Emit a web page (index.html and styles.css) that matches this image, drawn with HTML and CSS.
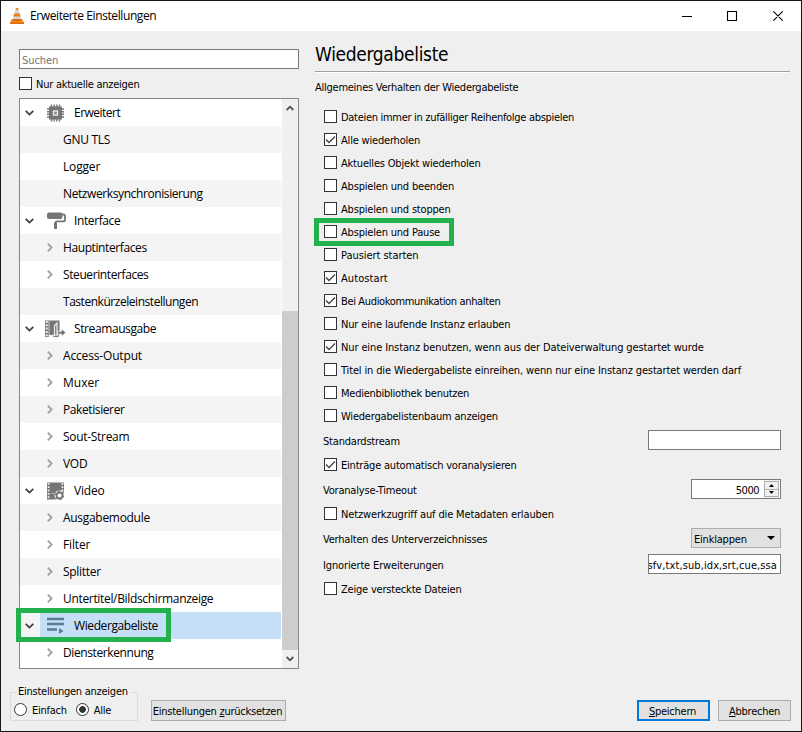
FILE: index.html
```html
<!DOCTYPE html>
<html lang="de">
<head>
<meta charset="utf-8">
<title>Erweiterte Einstellungen</title>
<link rel="stylesheet" href="styles.css">
</head>
<body>
<svg class="defs" aria-hidden="true">
  <symbol id="open" viewBox="0 0 9 6"><path d="M.7.8 4.5 4.6 8.3.8" fill="none" stroke="#404040" stroke-width="1.8"/></symbol>
  <symbol id="closed" viewBox="0 0 6 9"><path d="M.8.7 4.6 4.5.8 8.3" fill="none" stroke="#a0a0a0" stroke-width="1.8"/></symbol>
  <symbol id="tick" viewBox="0 0 11 11"><path d="M1 5.5 4 8.5 10 2.5" fill="none" stroke="#404040" stroke-width="1.3"/></symbol>
</svg>
<div class="window">
  <header class="titlebar">
    <svg class="cone" viewBox="0 0 14 16"><path d="M1.7 11h10.6l1.7 4.5H0z" fill="#f28a17"/><path d="M0 14.4h14V16H0z" fill="#d96f0b"/><path d="M6 0h2l3.6 12.2Q7 14 2.4 12.2z" fill="#d4d4d4"/><path d="M5.500 1.800 6 0h2l.5 1.800zM4.300 5.500h5.400l.9 3H3.400z" fill="#f07d13"/><path d="M2.800 11h8.400l.4 1.400Q7 14 2.400 12.400z" fill="#e5680c"/></svg>
    <span class="caption">Erweiterte Einstellungen</span>
    <svg class="controls" viewBox="0 0 103 12"><path d="M0 6.500h10M45.500 1.500h9v9h-9zM91.300 1.300l9.400 9.400M100.700 1.300l-9.400 9.400" fill="none" stroke="#000" stroke-width="1.1"/></svg>
  </header>
  <div class="body">
    <aside class="left">
      <div class="field search">Suchen</div>
      <label class="check only"><i class="box"></i><span>Nur aktuelle anzeigen</span></label>
      <div class="tree">
        <ul>
          <li class="top"><svg class="tw"><use href="#open"/></svg><svg class="ic" viewBox="0 0 22 18"><path d="M5 2.500h13v13H5z" fill="#757575"/><path d="M7.500.5v17M10.200.5v17M12.800.5v17M15.500.5v17M3 5h17M3 7.700h17M3 10.300h17M3 13h17" stroke="#757575" stroke-width="1.400"/><path d="M9.500 7h4v4h-4z" fill="#8a8a8a" stroke="#e4e4e4" stroke-width="1.400"/></svg><span>Erweitert</span></li>
          <li class="sub"><span>GNU TLS</span></li>
          <li class="sub"><span>Logger</span></li>
          <li class="sub"><span>Netzwerksynchronisierung</span></li>
          <li class="top"><svg class="tw"><use href="#open"/></svg><svg class="ic" viewBox="0 0 22 18"><rect x="3" y=".5" width="15.500" height="6.500" rx="2" fill="#757575"/><path d="M18 2.500h1.500q1.500 0 1.500 1.500v4q0 1.300-1.500 1.300H13q-1.500 0-1.500 1.500V12" fill="none" stroke="#757575" stroke-width="1.800"/><path d="M10 10.500h3V17h-3z" fill="#757575"/></svg><span>Interface</span></li>
          <li class="sub"><svg class="tw"><use href="#closed"/></svg><span>Hauptinterfaces</span></li>
          <li class="sub"><svg class="tw"><use href="#closed"/></svg><span>Steuerinterfaces</span></li>
          <li class="sub"><span>Tastenkürzeleinstellungen</span></li>
          <li class="top"><svg class="tw"><use href="#open"/></svg><svg class="ic" viewBox="0 0 22 18"><path d="M1 .5h14.500V15h-1V17H9v-2H5v2H1z" fill="#757575"/><path d="M2.700 1v16" stroke="#eee" stroke-width="2" stroke-dasharray="2 1.300"/><path d="M5 1v16" stroke="#eee" stroke-width=".7"/><path d="M7 15.500h3.500V5.500L13 3v12h-1.500" fill="none" stroke="#e8e8e8" stroke-width="1.300"/><path d="M13.500 11.300h4V8.700l4.300 3.900-4.300 3.900v-2.500h-4z" fill="#757575" stroke="#fff" stroke-width=".7"/></svg><span>Streamausgabe</span></li>
          <li class="sub"><svg class="tw"><use href="#closed"/></svg><span>Access-Output</span></li>
          <li class="sub"><svg class="tw"><use href="#closed"/></svg><span>Muxer</span></li>
          <li class="sub"><svg class="tw"><use href="#closed"/></svg><span>Paketisierer</span></li>
          <li class="sub"><svg class="tw"><use href="#closed"/></svg><span>Sout-Stream</span></li>
          <li class="sub"><svg class="tw"><use href="#closed"/></svg><span>VOD</span></li>
          <li class="top"><svg class="tw"><use href="#open"/></svg><svg class="ic" viewBox="0 0 22 18"><path d="M3 .5h17V11h-5l-3 3v3.500H3z" fill="#757575"/><path d="M4.600 1v16M18.400 1v9" stroke="#eee" stroke-width="1.800" stroke-dasharray="1.800 1.500"/><path d="M6.500 11.500H12" stroke="#aaa"/><circle cx="15.500" cy="13.500" r="5" fill="#fff"/><circle cx="15.500" cy="13.500" r="3" fill="none" stroke="#757575" stroke-width="1.800"/><circle cx="15.500" cy="13.500" r="4" fill="none" stroke="#757575" stroke-width="1.300" stroke-dasharray="2.100 2.090"/></svg><span>Video</span></li>
          <li class="sub"><svg class="tw"><use href="#closed"/></svg><span>Ausgabemodule</span></li>
          <li class="sub"><svg class="tw"><use href="#closed"/></svg><span>Filter</span></li>
          <li class="sub"><svg class="tw"><use href="#closed"/></svg><span>Splitter</span></li>
          <li class="sub"><svg class="tw"><use href="#closed"/></svg><span>Untertitel/Bildschirmanzeige</span></li>
          <li class="top selected"><svg class="tw"><use href="#open"/></svg><svg class="ic" viewBox="0 0 22 18"><path d="M3 2h17M3 7h17M3 12.500h10" stroke="#597b98" stroke-width="2.500"/><path d="M15 11l4.500 3-4.500 3z" fill="#597b98"/></svg><span>Wiedergabeliste</span></li>
          <li class="sub"><svg class="tw"><use href="#closed"/></svg><span>Diensterkennung</span></li>
        </ul>
        <div class="scroll">
          <svg viewBox="0 0 8 6"><path d="M.7 5 4 1.700 7.300 5" fill="none" stroke="#505050" stroke-width="1.800"/></svg>
          <div class="track"><div class="thumb"></div></div>
          <svg viewBox="0 0 8 6"><path d="M.7 1 4 4.300 7.300 1" fill="none" stroke="#505050" stroke-width="1.800"/></svg>
        </div>
        <div class="mark mark-tree"></div>
      </div>
    </aside>
    <main class="right">
      <h1><span>Wiedergabeliste</span></h1>
      <p class="intro">Allgemeines Verhalten der Wiedergabeliste</p>
      <div class="options">
        <label class="check"><i class="box"></i><span>Dateien immer in zufälliger Reihenfolge abspielen</span></label>
        <label class="check"><i class="box"><svg><use href="#tick"/></svg></i><span>Alle wiederholen</span></label>
        <label class="check"><i class="box"></i><span>Aktuelles Objekt wiederholen</span></label>
        <label class="check"><i class="box"></i><span>Abspielen und beenden</span></label>
        <label class="check"><i class="box"></i><span>Abspielen und stoppen</span></label>
        <label class="check"><i class="box"></i><span>Abspielen und Pause</span><b class="mark mark-option"></b></label>
        <label class="check"><i class="box"></i><span>Pausiert starten</span></label>
        <label class="check"><i class="box"><svg><use href="#tick"/></svg></i><span>Autostart</span></label>
        <label class="check"><i class="box"><svg><use href="#tick"/></svg></i><span>Bei Audiokommunikation anhalten</span></label>
        <label class="check"><i class="box"></i><span>Nur eine laufende Instanz erlauben</span></label>
        <label class="check"><i class="box"><svg><use href="#tick"/></svg></i><span>Nur eine Instanz benutzen, wenn aus der Dateiverwaltung gestartet wurde</span></label>
        <label class="check"><i class="box"></i><span>Titel in die Wiedergabeliste einreihen, wenn nur eine Instanz gestartet werden darf</span></label>
        <label class="check"><i class="box"></i><span>Medienbibliothek benutzen</span></label>
        <label class="check"><i class="box"></i><span>Wiedergabelistenbaum anzeigen</span></label>
        <div class="row"><span>Standardstream</span><div class="field wide"></div></div>
        <label class="check"><i class="box"><svg><use href="#tick"/></svg></i><span>Einträge automatisch voranalysieren</span></label>
        <div class="row"><span>Voranalyse-Timeout</span><div class="field spin"><span>5000</span><div class="steps"><i><svg viewBox="0 0 5 3"><path d="M0 3 2.500 0 5 3z"/></svg></i><i><svg viewBox="0 0 5 3"><path d="M0 0 2.500 3 5 0z"/></svg></i></div></div></div>
        <label class="check"><i class="box"></i><span>Netzwerkzugriff auf die Metadaten erlauben</span></label>
        <div class="row"><span>Verhalten des Unterverzeichnisses</span><div class="combo"><span>Einklappen</span><svg viewBox="0 0 8 4"><path d="M0 0h8L4 4z"/></svg></div></div>
        <div class="row"><span>Ignorierte Erweiterungen</span><div class="field wide ext"><span>sfv,txt,sub,idx,srt,cue,ssa</span></div></div>
        <label class="check"><i class="box"></i><span>Zeige versteckte Dateien</span></label>
      </div>
    </main>
  </div>
  <footer class="bottom">
    <fieldset class="group">
      <legend>Einstellungen anzeigen</legend>
      <label><i class="radio"></i><span>Einfach</span></label>
      <label><i class="radio on"></i><span>Alle</span></label>
    </fieldset>
    <button class="btn reset"><span>Einstellungen <u>z</u>urücksetzen</span></button>
    <button class="btn save"><span><u>S</u>peichern</span></button>
    <button class="btn"><span><u>A</u>bbrechen</span></button>
  </footer>
</div>
</body>
</html>
```
FILE: styles.css
```css
* { box-sizing: border-box; }
body { margin: 0; color: #000; font: 11px/14px "DejaVu Sans Condensed", "DejaVu Sans", sans-serif; font-stretch: condensed; letter-spacing: -0.25px; white-space: nowrap; }
.defs { position: absolute; width: 0; height: 0; }
svg { display: block; flex: none; }
.window { width: 802px; height: 732px; border: 1px solid #18181c; background: #efefef; display: flex; flex-direction: column; overflow: hidden; }
.titlebar { height: 30px; flex: none; background: #fff; display: flex; align-items: center; padding: 0 16px 0 9px; }
.cone { width: 14px; height: 16px; }
.caption { font: 12px/16px "Open Sans", sans-serif; letter-spacing: -0.4px; margin-left: 6px; }
.controls { width: 103px; height: 12px; margin-left: auto; }
.body { display: flex; height: 640px; flex: none; }
.left { width: 280px; margin-left: 18px; padding-top: 18px; flex: none; }
.field { height: 20px; border: 1px solid #7a7a7a; background: #fff; }
.search { color: #767676; padding: 4px 2px 0; letter-spacing: -0.05px; }
.check { display: flex; align-items: center; height: 23px; position: relative; }
.check > span { margin-top: 2px; }
.box { width: 13px; height: 13px; border: 1px solid #333; background: #fff; margin-right: 4px; flex: none; }
.box svg { width: 11px; height: 11px; }
.only { height: 29px; }

/* Settings tree */
.tree { position: relative; height: 571px; border: 1px solid #828790; background: #fff; display: flex; }
.tree ul { width: 261px; margin: 0 1px 0 0; padding: 0; list-style: none; font: 12px/16px "Open Sans", sans-serif; letter-spacing: -0.4px; }
.tree li { height: 27px; display: flex; align-items: center; }
.tree li:nth-child(even) { background: #f4f4f4; }
.tree li:nth-child(1) { letter-spacing: -0.52px; }
.tree li:nth-child(3), .tree li:nth-child(10), .tree li:nth-child(15), .tree li:nth-child(17) { letter-spacing: -0.16px; }
.tree li:nth-child(8) { letter-spacing: -0.46px; }
.tree li:nth-child(11) { letter-spacing: 0; }
.tree li:nth-child(2), .tree li:nth-child(13), .tree li:nth-child(14), .tree li:nth-child(16), .tree li:nth-child(18) { letter-spacing: -0.3px; }
.tree li:nth-child(19) { letter-spacing: -0.33px; }
.tree .tw { width: 9px; height: 6px; }
.top .tw { margin-left: 5px; }
.top .ic { width: 22px; height: 18px; margin: 0 8px 0 10px; }
.sub { padding-left: 27px; }
.tree .sub .tw { width: 6px; height: 9px; margin-right: 10px; }
.sub > span:first-child { margin-left: 16px; }
.tree .selected:nth-child(even) { background: linear-gradient(90deg, #f4f4f4 20px, #c5dff6 20px); }
.scroll { width: 16px; background: #f0f0f0; display: flex; flex-direction: column; align-items: center; }
.scroll > svg { width: 8px; height: 6px; margin: 6px 0; }
.track { flex: 1; align-self: stretch; padding-top: 194px; display: flex; }
.thumb { flex: 1; background: #cdcdcd; }
.mark { position: absolute; border: 5px solid #22b14c; }
.mark-tree { left: -4px; top: 509px; width: 155px; height: 34px; }
.mark-option { left: -10px; top: -2px; width: 140px; height: 28px; }

/* Options page */
.right { margin-left: 16px; width: 475px; }
h1 { margin: 0; height: 41px; padding-top: 11px; font-size: 19px; line-height: 24px; font-weight: 400; letter-spacing: -0.33px; border-bottom: 1px solid #a0a0a0; box-shadow: 0 1px #fff; }
.intro { margin: 0; height: 33px; padding-top: 9px; }
.options { padding: 0 9px; }
.options > :nth-child(1) { letter-spacing: -0.3px; }
.options > :nth-child(n+2):nth-child(-n+6) { letter-spacing: -0.19px; }
.options > :nth-child(7) { letter-spacing: -0.05px; }
.options > :nth-child(8) { letter-spacing: 0.08px; }
.options > :nth-child(9) { letter-spacing: -0.35px; }
.options > :nth-child(10) { letter-spacing: -0.15px; }
.options > :nth-child(11) { letter-spacing: -0.12px; }
.options > :nth-child(12) { letter-spacing: -0.14px; }
.options > :nth-child(n+14) { letter-spacing: -0.2px; }
.options > :nth-child(18), .options > :nth-child(20) { letter-spacing: -0.14px; }
.row { height: 26px; display: flex; align-items: center; justify-content: space-between; }
.row > span { margin: 3px 0 0 -1px; }
.wide { width: 133px; }
.ext { overflow: hidden; display: flex; justify-content: flex-end; align-items: center; padding: 3px 3px 0 0; letter-spacing: 0.1px; }
.spin { width: 90px; display: flex; align-items: center; letter-spacing: -0.5px; }
.spin > span { margin: 3px 5px 0 auto; }
.steps { width: 15px; height: 18px; margin-right: 1px; display: flex; flex-direction: column; background: #f0f0f0; padding: 1px 0; }
.steps i { flex: 1; border: 1px solid #adadad; display: flex; align-items: center; justify-content: center; }
.steps i + i { border-top: 0; }
.steps svg { width: 5px; height: 3px; }
.combo { width: 90px; height: 20px; border: 1px solid #adadad; background: #e1e1e1; display: flex; align-items: center; justify-content: space-between; padding: 0 5px 0 2px; }
.combo span { margin-top: 3px; }
.combo svg { width: 8px; height: 4px; }

/* Bottom bar */
.bottom { flex: none; height: 60px; display: flex; align-items: flex-start; padding: 14px 10px 0 9px; }
.group { margin: 0 13px 0 0; width: 128px; height: 36px; border: 1px solid #dcdcdc; padding: 0 0 0 3px; display: flex; }
.group legend { padding: 0 2px; margin-left: 2px; line-height: 14px; }
.group label { display: flex; align-items: center; height: 21px; margin-right: 9px; }
.group label span { margin-top: 2px; }
.radio { width: 13px; height: 13px; border: 1px solid #333; border-radius: 50%; background: #fff; margin-right: 5px; }
.radio.on { background: radial-gradient(circle, #333 3px, #fff 3.7px); }
.btn { height: 21px; margin-top: 15px; padding: 2px 0 0; border: 1px solid #adadad; background: #e1e1e1; font: inherit; letter-spacing: inherit; color: #000; width: 73px; }
.reset { width: 135px; padding-right: 2px; }
.save { border: 2px solid #0078d7; margin-left: auto; margin-right: 8px; padding-right: 2px; }
u { text-underline-offset: 1px; }
```
